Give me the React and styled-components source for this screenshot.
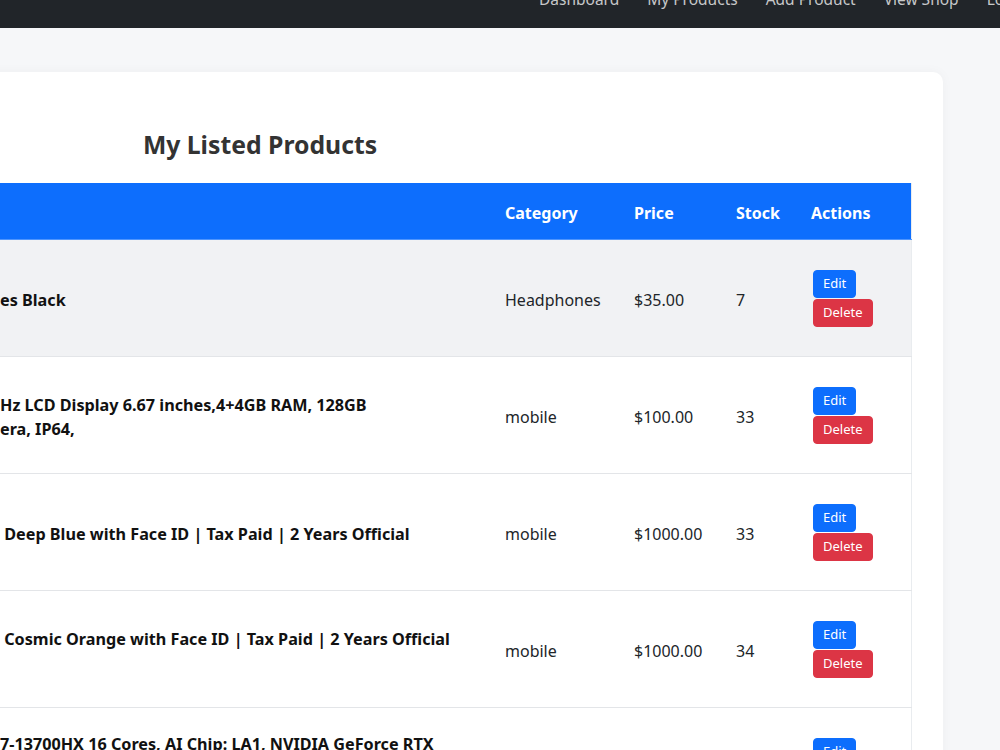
import React from 'react'
import styled, { createGlobalStyle } from 'styled-components'

const GlobalStyle = createGlobalStyle`
  html, body {
    margin: 0;
    padding: 0;
    overflow: hidden;
    background: #f6f7f9;
  }
  body {
    font-family: "Noto Sans", "Open Sans", sans-serif;
    color: #212529;
  }
`

const Navbar = styled.nav`
  height: 58px;
  margin-top: -30px;
  background: #212529;
  display: flex;
  align-items: center;
`
const NavLinks = styled.ul`
  list-style: none;
  margin: 0 0 0 539px;
  padding: 0;
  display: flex;
  gap: 28px;
  white-space: nowrap;
`
const NavLink = styled.li`
  font-size: 15.5px;
  line-height: 22px;
  color: rgba(255, 255, 255, 0.75);
`

const Main = styled.main`
  margin: 44px 57px 0 -423px;
`
const Card = styled.section`
  background: #ffffff;
  border-radius: 10px;
  padding: 58px 32px 32px;
  box-shadow: 0 0 12px rgba(0, 0, 0, 0.04);
`
const Title = styled.h2`
  margin: 0 0 23px;
  text-align: center;
  font-size: 24.75px;
  line-height: 30px;
  font-weight: 700;
  color: #333333;
`

const Table = styled.table`
  width: 100%;
  border-collapse: collapse;
  table-layout: fixed;
  border-right: 1px solid #e9ecef;
`
const Th = styled.th`
  background: #0d6efd;
  color: #ffffff;
  text-align: left;
  font-size: 16px;
  line-height: 24px;
  font-weight: 700;
  padding: 18px 9px 14px;
  border-bottom: 1px solid #4f95fd;
`
const Tr = styled.tr`
  background: ${p => (p.$hover ? '#f1f2f4' : '#ffffff')};
`
const Td = styled.td`
  height: 100px;
  padding: ${p => (p.$actions ? '8px 9px 8px 11px' : '10px 9px 6px')};
  padding-right: ${p => (p.$wide ? '38px' : '9px')};
  vertical-align: middle;
  border-bottom: 1px solid #e3e5e8;
  font-size: 16px;
  line-height: 24px;
`
const ProductCell = styled.div`
  display: flex;
  align-items: center;
  justify-content: space-between;
`
const Thumb = styled.div`
  width: 100px;
  height: 100px;
  border-radius: 6px;
  background: #e9ecef;
`
const Name = styled.div`
  width: 458px;
  font-size: 16.2px;
  font-weight: 700;
  white-space: pre;
  color: #111111;
`
const Actions = styled.div`
  display: flex;
  flex-direction: column;
  align-items: flex-start;
  gap: 1px;
`
const Button = styled.button`
  font-family: inherit;
  font-size: 13px;
  line-height: 19px;
  padding: 3px 9px 4px;
  border: 1px solid ${p => p.$bg};
  background: ${p => p.$bg};
  color: #ffffff;
  border-radius: 4px;
`

// names are shown as the part that is in view; the rest of each line lies past the left edge
const products = [
  { name: 'es Black', category: 'Headphones', price: '$35.00', stock: 7, hover: true },
  { name: 'Hz LCD Display 6.67 inches,4+4GB RAM, 128GB\nera, IP64,', category: 'mobile', price: '$100.00', stock: 33 },
  { name: ' Deep Blue with Face ID | Tax Paid | 2 Years Official', category: 'mobile', price: '$1000.00', stock: 33 },
  { name: ' Cosmic Orange with Face ID | Tax Paid | 2 Years Official\n\u00a0', category: 'mobile', price: '$1000.00', stock: 34 },
  { name: '7-13700HX 16 Cores, AI Chip: LA1, NVIDIA GeForce RTX\n4060 8GB, 16GB DDR5, 1TB SSD, 16" WQXGA\n240Hz Display', category: 'laptop', price: '$1500.00', stock: 12 },
]

const App = () => {
  return (
    <>
      <GlobalStyle />
      <Navbar>
        <NavLinks>
          <NavLink>Dashboard</NavLink>
          <NavLink>My Products</NavLink>
          <NavLink>Add Product</NavLink>
          <NavLink>View Shop</NavLink>
          <NavLink>Logout</NavLink>
        </NavLinks>
      </Navbar>
      <Main>
        <Card>
          <Title>My Listed Products</Title>
          <Table>
            <colgroup>
              <col style={{ width: 887 }} />
              <col style={{ width: 129 }} />
              <col style={{ width: 102 }} />
              <col style={{ width: 75 }} />
              <col style={{ width: 109 }} />
            </colgroup>
            <thead>
              <tr>
                <Th>Product</Th>
                <Th>Category</Th>
                <Th>Price</Th>
                <Th>Stock</Th>
                <Th>Actions</Th>
              </tr>
            </thead>
            <tbody>
              {products.map((p, i) => (
                <Tr key={i} $hover={p.hover}>
                  <Td $wide>
                    <ProductCell>
                      <Thumb />
                      <Name>{p.name}</Name>
                    </ProductCell>
                  </Td>
                  <Td>{p.category}</Td>
                  <Td>{p.price}</Td>
                  <Td>{p.stock}</Td>
                  <Td $actions>
                    <Actions>
                      <Button $bg="#0d6efd">Edit</Button>
                      <Button $bg="#dc3545">Delete</Button>
                    </Actions>
                  </Td>
                </Tr>
              ))}
            </tbody>
          </Table>
        </Card>
      </Main>
    </>
  )
}

export default App
